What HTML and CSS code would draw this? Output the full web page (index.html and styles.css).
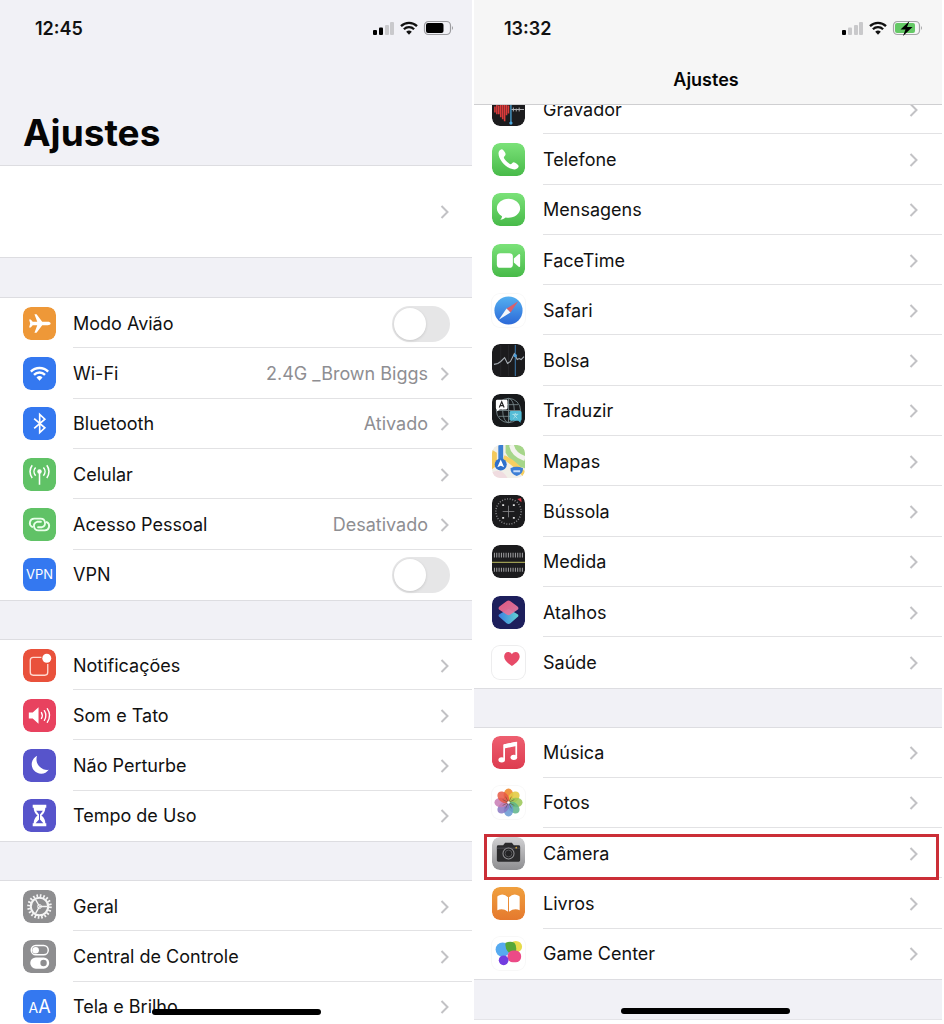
FILE: index.html
```html
<!DOCTYPE html>
<html lang="pt-BR">
<head>
<meta charset="utf-8">
<meta name="viewport" content="width=device-width, initial-scale=1">
<title>Ajustes</title>
<link rel="stylesheet" href="styles.css">
</head>
<body>
<svg class="defs" aria-hidden="true">
  <defs>
    <symbol id="chev" viewBox="0 0 10 16"><path d="M1.500 2 7.500 8l-6 6" fill="none" stroke="#c2c2c5" stroke-width="2"/></symbol>
    <symbol id="wifi" viewBox="0 0 18 14">
      <path d="M1 5.200a11.500 11.500 0 0 1 16 0M3.900 8.200a7.300 7.300 0 0 1 10.200 0" fill="none" stroke="currentColor" stroke-width="2.300"/>
      <path d="M9 13.700 6.200 10.800a4 4 0 0 1 5.600 0z" fill="currentColor"/>
    </symbol>
    <linearGradient id="green" x2="0" y2="1"><stop stop-color="#7be279"/><stop offset="1" stop-color="#48ba49"/></linearGradient>
    <linearGradient id="blue" x2="0" y2="1"><stop stop-color="#55b0f0"/><stop offset="1" stop-color="#2b68d8"/></linearGradient>
    <linearGradient id="silver" x2="0" y2="1"><stop stop-color="#d2d2d4"/><stop offset="1" stop-color="#8d8d90"/></linearGradient>
    <linearGradient id="orange" x2="0" y2="1"><stop stop-color="#f0a03e"/><stop offset="1" stop-color="#e5792e"/></linearGradient>
    <linearGradient id="music" x2="0" y2="1"><stop stop-color="#ee5f70"/><stop offset="1" stop-color="#dd3c50"/></linearGradient>
    <linearGradient id="pink" x2="1" y2="1"><stop stop-color="#ef5a80"/><stop offset="1" stop-color="#dd7fa8"/></linearGradient>
    <linearGradient id="teal" x2="1" y2="0"><stop stop-color="#3a7fe0"/><stop offset="1" stop-color="#63d2d3"/></linearGradient>
    <clipPath id="tile"><rect width="34" height="34" rx="8"/></clipPath>
  </defs>
</svg>
<div class="page">
  <main class="phone phone-tall">
    <header class="large-head">
      <div class="status">
        <time>12:45</time>
        <svg class="status-icons" viewBox="0 0 82 18" role="img" aria-label="Sinal, Wi-Fi e bateria">
          <rect x="1" y="10" width="4" height="5" rx="1"/><rect x="7" y="7.500" width="4" height="7.500" rx="1"/>
          <g fill="#c9c9cc"><rect x="13" y="5" width="4" height="10" rx="1"/><rect x="18" y="2" width="4" height="13" rx="1"/></g>
          <use href="#wifi" x="28" y="1" width="18" height="14"/>
          <rect x="52.500" y="1.500" width="26" height="13" rx="4" fill="none" stroke="#9c9ca0" stroke-width="1.200"/>
          <rect x="54" y="3" width="17.500" height="10" rx="2"/><path d="M80 6q2 2 0 4z" fill="#9c9ca0"/>
        </svg>
      </div>
      <h1>Ajustes</h1>
    </header>
    <a class="profile" href="#conta" aria-label="Conta"><svg class="chev"><use href="#chev"/></svg></a>

    <ul class="group rows-6">
      <li class="row">
        <svg class="icon" viewBox="0 0 34 34"><rect width="34" height="34" rx="8" fill="#ee9838"/><path fill="#fff" d="M28.500 17c0 1-1.500 1.700-3 1.700h-5.700L14 26.500h-2.200l2.900-7.800H10L8 21H6.300L7.400 17 6.300 13H8l2 2.300h4.700L11.800 7.500H14l5.800 7.800h5.700c1.500 0 3 .7 3 1.700z"/></svg>
        <label class="body"><span class="label">Modo Avião</span><input class="switch" type="checkbox" role="switch"></label>
      </li>
      <li><a class="row" href="#wifi-ajustes">
        <svg class="icon" viewBox="0 0 34 34" color="#fff"><rect width="34" height="34" rx="8" fill="#3478f0"/><use href="#wifi" x="7" y="9" width="20" height="16"/></svg>
        <span class="body"><span class="label">Wi-Fi</span><span class="value">2.4G _Brown Biggs</span><svg class="chev"><use href="#chev"/></svg></span></a></li>
      <li><a class="row" href="#bluetooth">
        <svg class="icon" viewBox="0 0 34 34"><rect width="34" height="34" rx="8" fill="#3478f0"/><path d="m11.500 12 11 9.500-5.300 4.800V7.700l5.300 4.800-11 9.500" fill="none" stroke="#fff" stroke-width="1.700"/></svg>
        <span class="body"><span class="label">Bluetooth</span><span class="value">Ativado</span><svg class="chev"><use href="#chev"/></svg></span></a></li>
      <li><a class="row" href="#celular">
        <svg class="icon" viewBox="0 0 34 34"><rect width="34" height="34" rx="8" fill="#60c266"/><circle cx="17" cy="14" r="2.300" fill="#fff"/><path d="M17 15v12.500M13 9.800a6.200 6.200 0 0 0 0 8.400M21 9.800a6.200 6.200 0 0 1 0 8.400M9.500 7.500a10.500 10.500 0 0 0 0 13M24.500 7.500a10.500 10.500 0 0 1 0 13" fill="none" stroke="#fff" stroke-width="1.600"/></svg>
        <span class="body"><span class="label">Celular</span><svg class="chev"><use href="#chev"/></svg></span></a></li>
      <li><a class="row" href="#acesso-pessoal">
        <svg class="icon" viewBox="0 0 34 34"><rect width="34" height="34" rx="8" fill="#60c266"/><path d="M9.500 19.500A4.500 4.500 0 0 1 11.500 11h6.500a4.500 4.500 0 0 1 1.500 8.800h-4M24.500 14.500a4.500 4.500 0 0 1-2 8.500H16a4.500 4.500 0 0 1-1.500-8.800h4" fill="none" stroke="#e9ffe9" stroke-width="1.900" stroke-linecap="round"/></svg>
        <span class="body"><span class="label">Acesso Pessoal</span><span class="value">Desativado</span><svg class="chev"><use href="#chev"/></svg></span></a></li>
      <li class="row">
        <span class="icon text-icon">VPN</span>
        <label class="body"><span class="label">VPN</span><input class="switch" type="checkbox" role="switch"></label>
      </li>
    </ul>

    <ul class="group rows-4">
      <li><a class="row" href="#notificacoes">
        <svg class="icon" viewBox="0 0 34 34"><rect width="34" height="34" rx="8" fill="#e9513b"/><path d="M19 8.700h-8.500a3 3 0 0 0-3 3V24a3 3 0 0 0 3 3h12a3 3 0 0 0 3-3v-8.500" fill="none" stroke="#ffd9d0" stroke-width="1.400"/><circle cx="24.500" cy="9.500" r="4.600" fill="#fff"/></svg>
        <span class="body"><span class="label">Notificações</span><svg class="chev"><use href="#chev"/></svg></span></a></li>
      <li><a class="row" href="#som">
        <svg class="icon" viewBox="0 0 34 34"><rect width="34" height="34" rx="8" fill="#e8425f"/><path d="M6 14h4l6-5.500v17L10 20H6z" fill="#fff"/><path d="M19 14q1.800 3 0 6M22 12q3.200 5 0 10M25 10q4.800 7 0 14" fill="none" stroke="#fff" stroke-width="1.400" stroke-linecap="round"/></svg>
        <span class="body"><span class="label">Som e Tato</span><svg class="chev"><use href="#chev"/></svg></span></a></li>
      <li><a class="row" href="#nao-perturbe">
        <svg class="icon" viewBox="0 0 34 34"><rect width="34" height="34" rx="8" fill="#5754cb"/><path d="M14.500 7a11 11 0 0 0 12 14.500A9.700 9.700 0 1 1 14.500 7z" fill="#fff"/></svg>
        <span class="body"><span class="label">Não Perturbe</span><svg class="chev"><use href="#chev"/></svg></span></a></li>
      <li><a class="row" href="#tempo-de-uso">
        <svg class="icon" viewBox="0 0 34 34"><rect width="34" height="34" rx="8" fill="#5754cb"/><path d="M10 6h14v3h-1q0 5-4 8 4 3 4 8h1v3H10v-3h1q0-5 4-8-4-3-4-8h-1z" fill="#fff"/><path d="M13.500 12h7l-3 4v5l3.500 4h-8l3.500-4v-5z" fill="#5754cb"/></svg>
        <span class="body"><span class="label">Tempo de Uso</span><svg class="chev"><use href="#chev"/></svg></span></a></li>
    </ul>

    <ul class="group rows-3">
      <li><a class="row" href="#geral">
        <svg class="icon" viewBox="0 0 34 34"><rect width="34" height="34" rx="8" fill="#8e8e90"/><g fill="none" stroke="#f4f4f4"><circle cx="17" cy="17" r="11.200" stroke-width="3" stroke-dasharray="1.700 1.818"/><circle cx="17" cy="17" r="9" stroke-width="2.200"/><path d="M17 17h8M17 17l-4-7M17 17l-4 7" stroke-width="1.400"/><circle cx="17" cy="17" r="2" stroke-width="1"/></g></svg>
        <span class="body"><span class="label">Geral</span><svg class="chev"><use href="#chev"/></svg></span></a></li>
      <li><a class="row" href="#central">
        <svg class="icon" viewBox="0 0 34 34"><rect width="34" height="34" rx="8" fill="#8e8e90"/><rect x="8.500" y="5.700" width="17.500" height="9.500" rx="4.700" fill="none" stroke="#fff" stroke-width="1.500"/><circle cx="13" cy="10.500" r="3.400" fill="#fff"/><rect x="7.500" y="18" width="19.500" height="11.500" rx="5.700" fill="#fff"/><circle cx="21.200" cy="23.700" r="3.300" fill="#8e8e90"/></svg>
        <span class="body"><span class="label">Central de Controle</span><svg class="chev"><use href="#chev"/></svg></span></a></li>
      <li><a class="row" href="#tela">
        <span class="icon text-icon"><small>A</small><big>A</big></span>
        <span class="body"><span class="label">Tela e Brilho</span><svg class="chev"><use href="#chev"/></svg></span></a></li>
    </ul>
    <div class="home-bar"></div>
  </main>

  <section class="phone phone-scrolled" aria-label="Ajustes, aplicativos">
    <header class="nav-head">
      <div class="status">
        <time>13:32</time>
        <svg class="status-icons" viewBox="0 0 82 18" role="img" aria-label="Sinal, Wi-Fi e bateria carregando">
          <rect x="1" y="10" width="4" height="5" rx="1"/>
          <g fill="#c9c9cb"><rect x="7" y="7.500" width="4" height="7.500" rx="1"/><rect x="13" y="5" width="4" height="10" rx="1"/><rect x="18" y="2" width="4" height="13" rx="1"/></g>
          <use href="#wifi" x="28" y="1" width="18" height="14"/>
          <rect x="52.500" y="1.500" width="26" height="13" rx="4" fill="none" stroke="#a5a5a7" stroke-width="1.200"/>
          <rect x="54" y="3" width="20" height="10" rx="2" fill="#65c966"/><path d="M80 6q2 2 0 4z" fill="#a5a5a7"/>
          <path d="m68.500 1-9 8.500h5L62 16l9.500-9H66z"/>
        </svg>
      </div>
      <h2>Ajustes</h2>
    </header>
    <ul class="group rows-12">
      <li><a class="row" href="#gravador">
        <svg class="icon" viewBox="0 0 34 34"><rect width="34" height="34" rx="8" fill="#1c1c1e"/><path d="M3 14v6M5 12v10M7 13v9M9 9v16M11 7v20M13 6v23M15 10v13M17 13v8" stroke="#dd3b3b" stroke-width="1.600"/><path d="M20 17h13M22 15v4M25 16v3M28 15v4" stroke="#b8b8bb" stroke-width="1"/><path d="M19.500 4v27" stroke="#4ba7dd" stroke-width="1.300"/><circle cx="19.500" cy="31" r="1.700" fill="#4ba7dd"/></svg>
        <span class="body"><span class="label">Gravador</span><svg class="chev"><use href="#chev"/></svg></span></a></li>
      <li><a class="row" href="#telefone">
        <svg class="icon" viewBox="0 0 34 34"><rect width="34" height="34" rx="8" fill="url(#green)"/><path d="M10 6.500c-1.600.3-3.300 2-3.300 4C6.700 18 16 27.300 23.500 27.300c2 0 4-2 4-3.500 0-1-3.700-4-5-4s-2.300 2-3.500 2c-1.500 0-6.800-5.300-6.800-6.800 0-1.200 1.800-2 1.800-3.500 0-1.300-2.700-5.200-4-5z" fill="#fff"/></svg>
        <span class="body"><span class="label">Telefone</span><svg class="chev"><use href="#chev"/></svg></span></a></li>
      <li><a class="row" href="#mensagens">
        <svg class="icon" viewBox="0 0 34 34"><rect width="34" height="34" rx="8" fill="url(#green)"/><path d="M17 6C10.400 6 5 10.400 5 15.800c0 3.400 2.100 6.400 5.300 8.100 0 1.700-.8 2.600-1.800 3.600 2.200 0 4.200-1 5.600-2.200.9.200 1.900.3 2.900.3 6.600 0 12-4.400 12-9.800S23.600 6 17 6z" fill="#fff"/></svg>
        <span class="body"><span class="label">Mensagens</span><svg class="chev"><use href="#chev"/></svg></span></a></li>
      <li><a class="row" href="#facetime">
        <svg class="icon" viewBox="0 0 34 34"><rect width="34" height="34" rx="8" fill="url(#green)"/><rect x="5" y="9.500" width="16.500" height="15" rx="3.500" fill="#fff"/><path d="m22.500 15 5-4.500q1.500-.7 1.500 1v11q0 1.700-1.500 1l-5-4.500z" fill="#fff"/></svg>
        <span class="body"><span class="label">FaceTime</span><svg class="chev"><use href="#chev"/></svg></span></a></li>
      <li><a class="row" href="#safari">
        <svg class="icon framed-soft" viewBox="0 0 34 34"><circle cx="17" cy="17" r="14.500" fill="url(#blue)"/><path d="M27 7.500 15 15l4 4z" fill="#d9606c"/><path d="M7 26.500 15 15l4 4z" fill="#f4f6fa"/></svg>
        <span class="body"><span class="label">Safari</span><svg class="chev"><use href="#chev"/></svg></span></a></li>
      <li><a class="row" href="#bolsa">
        <svg class="icon" viewBox="0 0 34 34"><rect width="34" height="34" rx="8" fill="#1b1b1d"/><path d="M9 1v32M17 1v32" stroke="#2d2d30" stroke-width=".7"/><path d="M24 1v32" stroke="#3f7fb5"/><path d="m2 21 4-1 3-2 4-4 3 6 3-2 4-8 3 6 2-1 2 1 3-3" fill="none" stroke="#a9b0b7" stroke-width="1.100"/><circle cx="24" cy="12" r="1.700" fill="#4ba0dd"/></svg>
        <span class="body"><span class="label">Bolsa</span><svg class="chev"><use href="#chev"/></svg></span></a></li>
      <li><a class="row" href="#traduzir">
        <svg class="icon" viewBox="0 0 34 34"><rect width="34" height="34" rx="8" fill="#17191b"/><g fill="none" stroke="#77878b" stroke-width=".9"><circle cx="17" cy="17" r="12.500"/><ellipse cx="17" cy="17" rx="6" ry="12.500"/><path d="M4.500 17h25M17 4.500v25M7 11h20M7 23h20"/></g><path d="M4 7.500q0-1.500 1.500-1.500h9q1.500 0 1.500 1.500v7q0 1.500-1.500 1.500H8l-3 2v-2q-1-.3-1-1.500z" fill="#fff"/><path d="m7.500 14 2.500-6 2.500 6M8.500 12h3" fill="none" stroke="#222" stroke-width="1.200"/><path d="M18 19q0-1.500 1.500-1.500h9.500q1.500 0 1.500 1.500v7q0 1.500-1 1.500v2L27 27.500h-7.500q-1.500 0-1.500-1.500z" fill="#54bcd6"/><path d="M21 21h6M24 19.500V21M22 25l4-4M22 21l4 4" stroke="#a9dfe9"/></svg>
        <span class="body"><span class="label">Traduzir</span><svg class="chev"><use href="#chev"/></svg></span></a></li>
      <li><a class="row" href="#mapas">
        <svg class="icon" viewBox="0 0 34 34"><g clip-path="url(#tile)"><path fill="#f1efe8" d="M0 0h34v34H0z"/><path d="M14 0h20v24q-12-2-20-16z" fill="#a6d68a"/><path d="M20 0q2 10 14 14" fill="none" stroke="#f3f3ee" stroke-width="5"/><path d="M0 5 5 8v13L0 25z" fill="#f4c95c"/><path d="M12 13q10 4 22 18" fill="none" stroke="#f6cf62" stroke-width="5"/><path d="M0 28q10-5 16 6H0z" fill="#f0dce0"/><path d="M9 0v18" stroke="#3b7ed3" stroke-width="5"/><circle cx="9" cy="20" r="6.200" fill="#2e70cc"/><path d="m9 15 3.500 8L9 21.500 5.500 23z" fill="#fff"/><path d="M19 24q6-3 13 0 0 6-6.500 8Q19 30 19 24z" fill="#3d7fd6"/><path d="M22 27h7" stroke="#c9defa" stroke-width="2"/></g></svg>
        <span class="body"><span class="label">Mapas</span><svg class="chev"><use href="#chev"/></svg></span></a></li>
      <li><a class="row" href="#bussola">
        <svg class="icon" viewBox="0 0 34 34"><rect width="34" height="34" rx="8" fill="#1b1b1d"/><g fill="none" stroke="#8b8b8e"><circle cx="17" cy="17" r="13" stroke-dasharray="1 1.700" stroke-width="1.500"/><path d="M17 11v12M11 17h12" stroke-width=".8"/></g><path d="M10.500 10.500h2M21.500 10.500h2M10.500 23.500h2M21.500 23.500h2" stroke="#ddd" stroke-width="1.800"/><path d="m26 4 4-1 .5 4.500z" fill="#d73946"/></svg>
        <span class="body"><span class="label">Bússola</span><svg class="chev"><use href="#chev"/></svg></span></a></li>
      <li><a class="row" href="#medida">
        <svg class="icon" viewBox="0 0 34 34"><rect width="34" height="34" rx="8" fill="#1b1b1d"/><path d="M2 10.500h30" stroke="#a5a5a8" stroke-width="5" stroke-dasharray="1 1.400"/><path d="M2 25.500h30" stroke="#a5a5a8" stroke-width="4" stroke-dasharray="1 1.400"/><path d="M0 18h34" stroke="#9c9c52" stroke-width="1.300"/></svg>
        <span class="body"><span class="label">Medida</span><svg class="chev"><use href="#chev"/></svg></span></a></li>
      <li><a class="row" href="#atalhos">
        <svg class="icon" viewBox="0 0 34 34"><rect width="34" height="34" rx="8" fill="#1d1f5c"/><path d="m8 18.500 9-5 9 5q2.500 1.500 0 3.500l-7 6q-2 1.500-4 0l-7-6q-2.500-2 0-3.500z" fill="url(#teal)"/><path d="m8 10.500 7-5q2-1.500 4 0l7 5q2.500 2 0 4l-7 4.500q-2 1.500-4 0l-7-4.500q-2.500-2 0-4z" fill="url(#pink)" opacity=".94"/></svg>
        <span class="body"><span class="label">Atalhos</span><svg class="chev"><use href="#chev"/></svg></span></a></li>
      <li><a class="row" href="#saude">
        <svg class="icon framed" viewBox="0 0 34 34"><path d="M20.500 20.500c-4.500-2.800-8-6-8-9.700 0-2.500 1.800-4.500 4.200-4.500 1.600 0 3 .8 3.800 2.200.8-1.400 2.200-2.200 3.800-2.200 2.400 0 4.200 2 4.200 4.500 0 3.700-3.500 6.900-8 9.700z" fill="#e74b68"/></svg>
        <span class="body"><span class="label">Saúde</span><svg class="chev"><use href="#chev"/></svg></span></a></li>
    </ul>
    <ul class="group rows-5">
      <li><a class="row" href="#musica">
        <svg class="icon" viewBox="0 0 34 34"><rect width="34" height="34" rx="8" fill="url(#music)"/><path d="M12.500 24V9.500L25 7v14.500" fill="none" stroke="#fff" stroke-width="1.800"/><path d="M12.500 8.500 25 6v4.300l-12.500 2.500z" fill="#fff"/><ellipse cx="10" cy="24.500" rx="3.400" ry="2.700" fill="#fff"/><ellipse cx="22.500" cy="22" rx="3.400" ry="2.700" fill="#fff"/></svg>
        <span class="body"><span class="label">Música</span><svg class="chev"><use href="#chev"/></svg></span></a></li>
      <li><a class="row" href="#fotos">
        <svg class="icon framed-soft" viewBox="0 0 34 34"><g opacity=".95"><ellipse cx="17" cy="9.500" rx="5" ry="7" fill="#f08f38"/><ellipse cx="17" cy="9.500" rx="5" ry="7" fill="#e2c93c" fill-opacity=".9" transform="rotate(45 17 17)"/><ellipse cx="17" cy="9.500" rx="5" ry="7" fill="#94c44c" fill-opacity=".85" transform="rotate(90 17 17)"/><ellipse cx="17" cy="9.500" rx="5" ry="7" fill="#55b083" fill-opacity=".85" transform="rotate(135 17 17)"/><ellipse cx="17" cy="9.500" rx="5" ry="7" fill="#5f93d0" fill-opacity=".85" transform="rotate(180 17 17)"/><ellipse cx="17" cy="9.500" rx="5" ry="7" fill="#8270c0" fill-opacity=".85" transform="rotate(225 17 17)"/><ellipse cx="17" cy="9.500" rx="5" ry="7" fill="#c575b0" fill-opacity=".85" transform="rotate(270 17 17)"/><ellipse cx="17" cy="9.500" rx="5" ry="7" fill="#e6503a" fill-opacity=".85" transform="rotate(315 17 17)"/></g><g stroke="#5f4a3a" stroke-width="1" opacity=".55"><path d="m17 17-3-6M17 17l3-6M17 17l6-3M17 17l6 3M17 17l3 6M17 17l-3 6M17 17l-6 3M17 17l-6-3"/></g><circle cx="17" cy="17" r="1.300" fill="#fff"/></svg>
        <span class="body"><span class="label">Fotos</span><svg class="chev"><use href="#chev"/></svg></span></a></li>
      <li><a class="row highlighted" href="#camera">
        <svg class="icon" viewBox="0 0 34 34"><rect width="34" height="34" rx="8" fill="url(#silver)"/><path d="M5 10q0-1.500 1.500-1.500h5L13.500 6h7l2 2.500h5q1.500 0 1.500 1.500v14q0 1.500-1.500 1.500h-21Q5 25.500 5 24z" fill="#2b2b2d"/><path d="M5 11.500h24" stroke="#55555a" stroke-width=".8"/><circle cx="17" cy="17" r="5.700" fill="#222224" stroke="#8f8f92" stroke-width="1.100"/><circle cx="17" cy="17" r="3.500" fill="none" stroke="#56565a"/><circle cx="25" cy="11" r=".9" fill="#d6a93f"/></svg>
        <span class="body"><span class="label">Câmera</span><svg class="chev"><use href="#chev"/></svg></span></a></li>
      <li><a class="row" href="#livros">
        <svg class="icon" viewBox="0 0 34 34"><rect width="34" height="34" rx="8" fill="url(#orange)"/><path d="M16.500 10.500Q11.500 5.500 6 9.300q-.5.300-.5 1V24q5.500-2.500 11 1.500zM17.500 10.500q5-5 10.500-1.200.5.300.5 1V24q-5.500-2.500-11 1.500z" fill="#fff"/></svg>
        <span class="body"><span class="label">Livros</span><svg class="chev"><use href="#chev"/></svg></span></a></li>
      <li><a class="row" href="#game-center">
        <svg class="icon framed-soft" viewBox="0 0 34 34"><ellipse cx="24.500" cy="10" rx="6.500" ry="6" fill="#e7db4b"/><circle cx="11" cy="13" r="7.300" fill="#56aaf0"/><path d="M14 6q5-2 9 0 3 3 1.500 10H17q-4-4-3-10z" fill="#55a738"/><rect x="16" y="14" width="14" height="12" rx="5.500" fill="#ec4a87"/><circle cx="12" cy="24" r="5" fill="#733de0"/></svg>
        <span class="body"><span class="label">Game Center</span><svg class="chev"><use href="#chev"/></svg></span></a></li>
    </ul>
    <div class="home-bar"></div>
  </section>
</div>
</body>
</html>
```
FILE: styles.css
```css
* { box-sizing: border-box; }

body {
  margin: 0;
  background: #fff;
  color: #111;
  font-family: Inter, "Liberation Sans", sans-serif;
  font-size: 18px;
  line-height: 24px;
}

a { color: inherit; text-decoration: none; }
ul { list-style: none; margin: 0; padding: 0; }
h1, h2 { margin: 0; color: #050505; }
.defs { position: absolute; width: 0; height: 0; }

.page {
  display: grid;
  grid-template-columns: 1fr 1fr;
  grid-template-rows: minmax(0, 1fr);
  height: 100vh;
  min-height: 1000px;
  overflow: hidden;
}

.phone {
  position: relative;
  display: flex;
  flex-direction: column;
  gap: 40px;
  background: #f1f1f6;
}

/* The last row runs past the bottom edge of the screen. */
.phone-tall { height: calc(100% + 8px); }

.phone-scrolled {
  margin: 0 2px 4px;
  padding-bottom: 40px;
  border-bottom: 1px solid #e4e4e8;
}

.status {
  display: flex;
  align-items: center;
  justify-content: space-between;
  height: 57px;
  padding: 0 18px 0 35px;
  font-weight: 600;
}
.phone-scrolled .status { padding: 0 19px 0 30px; }
.status-icons { width: 82px; height: 18px; }

.large-head { height: 165px; margin-bottom: -40px; }
.large-head h1 {
  padding: 53px 23px 0;
  font-size: 37px;
  line-height: 46px;
  font-weight: 700;
}

.nav-head {
  position: relative;
  z-index: 1;
  height: 105px;
  margin-bottom: -61px;
  background: #f6f6f6;
  border-bottom: 1px solid #cfcfd1;
  text-align: center;
}
.nav-head h2 {
  padding-right: 4px;
  font-size: 18px;
  line-height: 46px;
  font-weight: 600;
}

.profile {
  display: flex;
  align-items: center;
  justify-content: flex-end;
  height: 93px;
  padding-right: 22px;
  background: #fff;
  border: solid #dddde1;
  border-width: 1px 0;
}

.group {
  display: flex;
  flex-direction: column;
  background: #fff;
  box-shadow: 0 -1px #dddde1, 0 1px #dddde1;
}
.rows-3 { flex: 3 0 auto; }
.rows-4 { flex: 4 0 auto; }
.rows-5 { flex: 5 0 auto; }
.rows-6 { flex: 6 0 auto; }
.rows-12 { flex: 12 0 auto; }

.group > li {
  display: flex;
  flex: 1 0 50px;
}

.row {
  position: relative;
  display: flex;
  flex: 1;
  align-items: center;
  gap: 17px;
  padding-left: 23px;
}
.phone-scrolled .row { gap: 18px; padding-left: 18px; }

.icon { flex: none; width: 33px; height: 33px; border-radius: 8px; }
.framed { box-shadow: 0 0 0 1px #ededee; }
.framed-soft { box-shadow: 0 0 0 1px #f8f8f8; }

.text-icon {
  display: flex;
  align-items: baseline;
  justify-content: center;
  background: #3478f0;
  color: #fff;
  font-size: 13px;
  line-height: 33px;
}
.text-icon small { font-size: 14px; }
.text-icon big { font-size: 18px; }

.body {
  display: flex;
  flex: 1;
  align-items: center;
  align-self: stretch;
  gap: 12px;
  padding: 2px 22px 0 0;
  border-bottom: 1px solid #e2e2e4;
}
.phone-scrolled .body { padding-right: 23px; }
.group > li:last-child .body,
.group > .row:last-child .body { border-bottom-color: transparent; }
.label { flex: 1; }
.value { color: #8e8e92; }
.chev { flex: none; width: 10px; height: 16px; }

.switch {
  appearance: none;
  display: flex;
  flex: none;
  width: 58px;
  height: 36px;
  margin: 0;
  padding: 2px;
  border-radius: 18px;
  background: #e6e6e7;
}
.switch::before {
  content: "";
  width: 32px;
  height: 32px;
  border-radius: 50%;
  background: #fff;
  box-shadow: 0 1px 3px #0002;
}
.switch:checked { justify-content: flex-end; background: #60c266; }

.highlighted::after {
  content: "";
  position: absolute;
  inset: 6px 3px -2px 10px;
  border: 3px solid #cb2e37;
}

.home-bar {
  position: absolute;
  bottom: 17px;
  left: 50%;
  width: 169px;
  height: 6px;
  margin-left: -84px;
  border-radius: 3px;
  background: #000;
}
.phone-scrolled .home-bar { bottom: 5px; margin-left: -87px; }
```
